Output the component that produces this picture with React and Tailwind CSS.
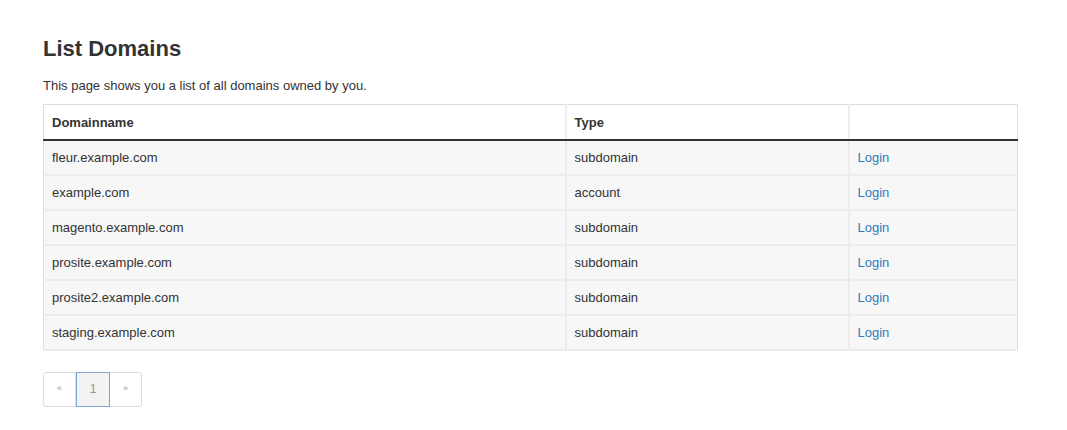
import React from "react";

const domains = [
  { name: "fleur.example.com", type: "subdomain" },
  { name: "example.com", type: "account" },
  { name: "magento.example.com", type: "subdomain" },
  { name: "prosite.example.com", type: "subdomain" },
  { name: "prosite2.example.com", type: "subdomain" },
  { name: "staging.example.com", type: "subdomain" },
];

export default function App() {
  return (
    <div className="min-h-[430px] bg-white px-[43px] pt-[36px] text-[#333] font-['Liberation_Sans',Arial,sans-serif]">
      {/* Title */}
      <h1 className="text-[22px] font-bold leading-[26px]">List Domains</h1>
      <p className="mt-[15px] text-[13px] leading-[18px]">
        This page shows you a list of all domains owned by you.
      </p>

      {/* Table */}
      <table className="mt-[9px] w-[975px] border-collapse border border-[#ddd] text-[13px] table-fixed">
        <colgroup>
          <col className="w-[522px]" />
          <col className="w-[283px]" />
          <col />
        </colgroup>
        <thead>
          <tr className="h-[35px] bg-white">
            <th className="border-r-2 border-[#eee] border-b-2 border-b-[#333] px-2 pt-[1px] text-left font-bold">
              Domainname
            </th>
            <th className="border-r-2 border-[#eee] border-b-2 border-b-[#333] px-2 pt-[1px] text-left font-bold">
              Type
            </th>
            <th className="border-b-2 border-b-[#333] px-2" />
          </tr>
        </thead>
        <tbody>
          {domains.map((d) => (
            <tr key={d.name} className="h-[35px] bg-[#f7f7f7]">
              <td className="border-r-2 border-b-2 border-[#ececec] px-2 pt-[1px]">{d.name}</td>
              <td className="border-r-2 border-b-2 border-[#ececec] px-2 pt-[1px]">{d.type}</td>
              <td className="border-b-2 border-[#ececec] px-2 pt-[1px]">
                <a href="#" className="text-[#337ab7]">Login</a>
              </td>
            </tr>
          ))}
        </tbody>
      </table>

      {/* Pagination */}
      <div className="mt-[21px] flex h-[35px] w-fit text-[#999]">
        <span className="flex w-[33px] items-center justify-center rounded-l-[3px] border border-[#ddd] text-[9px]">
          «
        </span>
        <span className="flex w-[34px] items-center justify-center border border-[#7aa6d4] bg-[#f3f3f3] text-[13px]">
          1
        </span>
        <span className="flex w-[32px] items-center justify-center rounded-r-[3px] border border-l-0 border-[#ddd] text-[9px]">
          »
        </span>
      </div>
    </div>
  );
}
